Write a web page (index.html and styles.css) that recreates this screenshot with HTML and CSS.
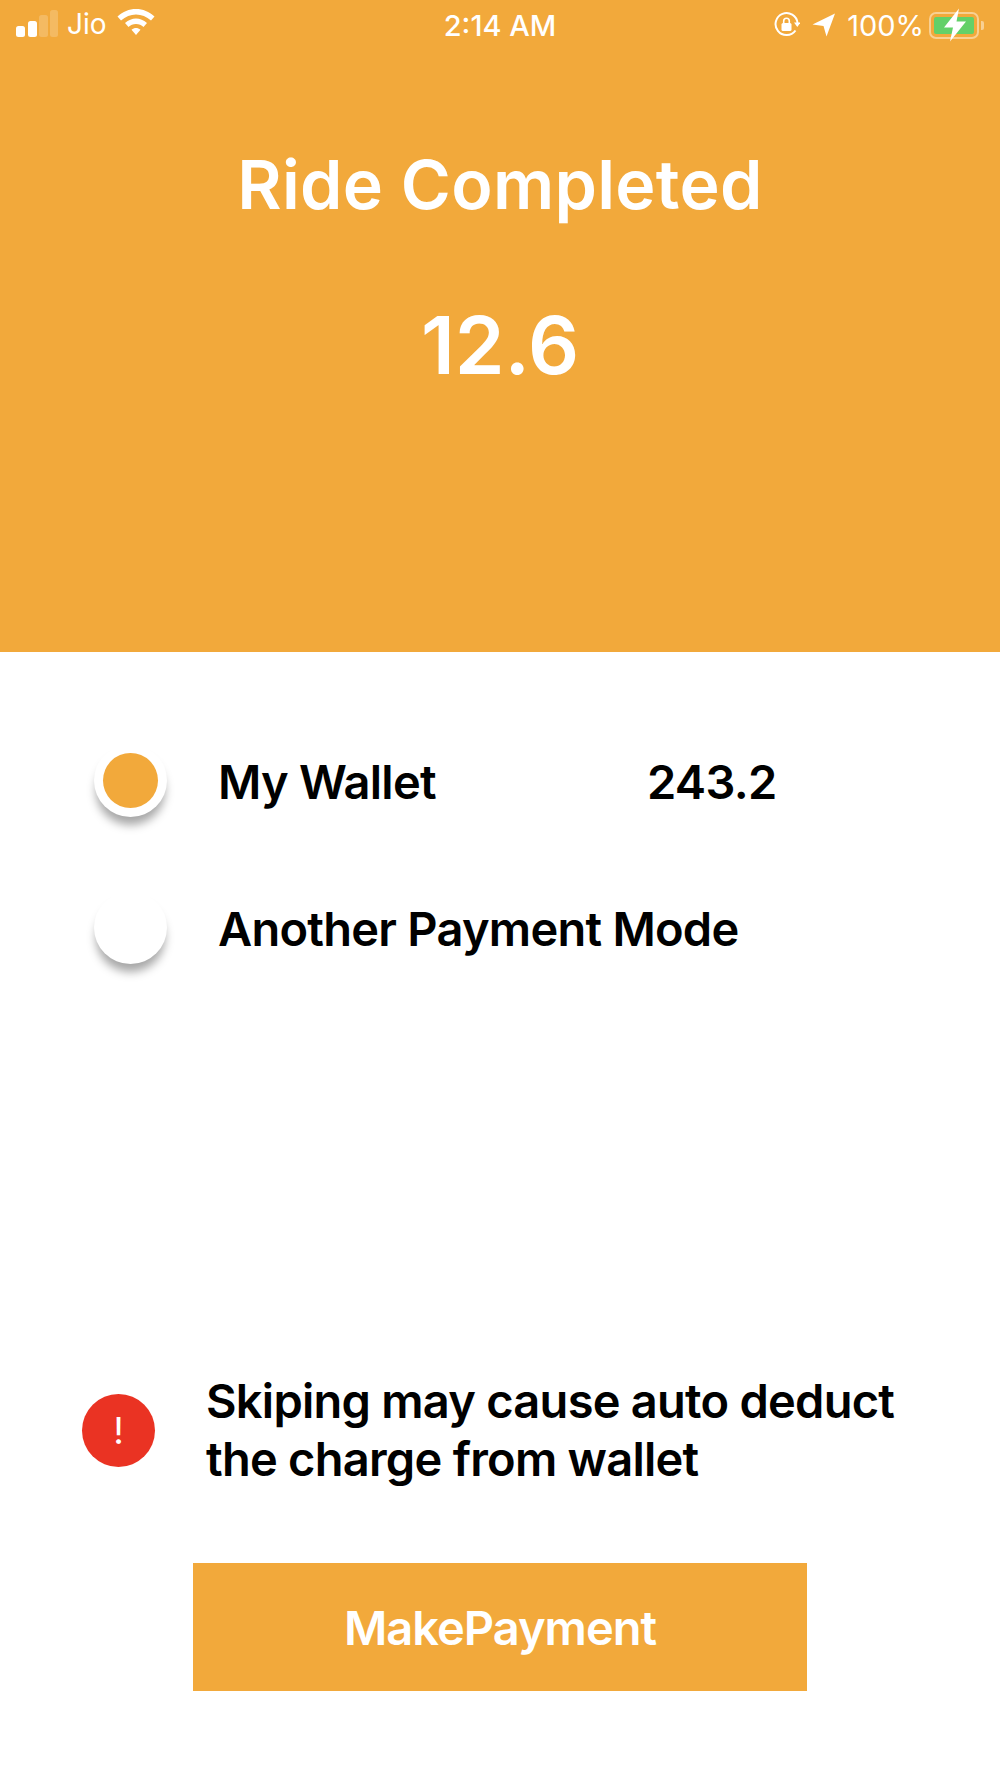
FILE: index.html
```html
<!DOCTYPE html>
<html lang="en">
<head>
  <meta charset="UTF-8">
  <meta name="viewport" content="width=device-width, initial-scale=1.0">
  <title>Ride Completed</title>
  <link rel="stylesheet" href="styles.css">
</head>
<body>

  <div class="header">
    <!-- Status bar -->
    <div class="status-bar">
      <div class="status-left">
        <svg class="signal" width="42" height="28" viewBox="0 0 42 28">
          <rect x="0" y="16" width="9" height="11" rx="2.500" fill="#fff"/>
          <rect x="12" y="11" width="9" height="16" rx="2.500" fill="#fff"/>
          <rect x="23" y="5" width="9" height="22" rx="2.500" fill="#fff" opacity="0.2"/>
          <rect x="34" y="0" width="8" height="27" rx="2.500" fill="#fff" opacity="0.2"/>
        </svg>
        <span class="carrier">Jio</span>
        <svg class="wifi" width="38" height="28" viewBox="0 0 38 28">
          <path d="M19 1C12 1 6 3.500 0.500 8.500L4 12.500C8.500 8.500 13.500 6.500 19 6.500C24.500 6.500 29.500 8.500 34 12.500L37.500 8.500C32 3.500 26 1 19 1Z" fill="#fff"/>
          <path d="M19 10.500C15 10.500 11.500 12 8 15L11.500 19C13.500 17 16 16 19 16C22 16 24.500 17 26.500 19L30 15C26.500 12 23 10.500 19 10.500Z" fill="#fff"/>
          <path d="M19 20C17.500 20 15.800 20.500 14.500 21.800L19 27L23.500 21.800C22.200 20.500 20.500 20 19 20Z" fill="#fff"/>
        </svg>
      </div>
      <div class="status-time">2:14 AM</div>
      <div class="status-right">
        <svg class="lock" width="26" height="26" viewBox="0 0 26 26">
          <path d="M21.500 18.500A11 11 0 1 1 23.500 11" fill="none" stroke="#fff" stroke-width="2"/>
          <path d="M20 10.500H26.500L23.300 15Z" fill="#fff"/>
          <rect x="7.500" y="11" width="10" height="8" rx="1.500" fill="#fff"/>
          <path d="M9.700 11V9A2.800 2.800 0 0 1 15.300 9V11" fill="none" stroke="#fff" stroke-width="1.600"/>
        </svg>
        <svg class="arrow" width="24" height="24" viewBox="0 0 24 24">
          <path d="M23 0.500L0.500 11.500L11.500 13L14.500 23.500Z" fill="#fff"/>
        </svg>
        <span class="battery-text">100%</span>
        <div class="battery">
          <div class="battery-body">
            <div class="battery-fill"></div>
          </div>
          <div class="battery-tip"></div>
          <svg class="bolt" width="24" height="34" viewBox="0 0 24 34">
            <path d="M16 0.500L1 19.500H10L7 33.500L23 13.500H13.500Z" fill="#fff"/>
          </svg>
        </div>
      </div>
    </div>

    <div class="ride-title">Ride Completed</div>
    <div class="ride-amount">12.6</div>
  </div>

  <div class="content">
    <div class="payment-options">
      <div class="option">
        <div class="radio"><div class="radio-dot"></div></div>
        <div class="option-label">My Wallet</div>
        <div class="option-value">243.2</div>
      </div>
      <div class="option">
        <div class="radio"></div>
        <div class="option-label">Another Payment Mode</div>
      </div>
    </div>

    <div class="warning">
      <div class="warning-icon">!</div>
      <div class="warning-text">Skiping may cause auto deduct the charge from wallet</div>
    </div>

    <button class="pay-button">MakePayment</button>
  </div>

</body>
</html>
```

FILE: styles.css
```css
* {
  box-sizing: border-box;
}

body {
  margin: 0;
  padding: 0;
  height: 1778px;
  background-color: #fff;
  color: #000;
  font-family: Inter, 'Liberation Sans', sans-serif;
  overflow: hidden;
}

.header {
  height: 652px;
  background-color: #f2a93b;
  color: #fff;
  display: flex;
  flex-direction: column;
  align-items: center;
}

.status-bar {
  width: 100%;
  height: 50px;
  padding: 0 16px;
  display: grid;
  grid-template-columns: 1fr auto 1fr;
  align-items: center;
  font-size: 28px;
  font-weight: 400;
}

.status-left {
  display: flex;
  align-items: center;
}

.signal {
  margin-top: -2px;
}

.carrier {
  margin-left: 9px;
  margin-top: -2px;
}

.wifi {
  margin-left: 10px;
  margin-top: -6px;
}

.status-time {
  font-size: 29px;
  font-weight: 500;
}

.status-right {
  display: flex;
  align-items: center;
  justify-content: flex-end;
}

.arrow {
  margin-left: 12px;
}

.battery-text {
  margin-left: 11px;
  font-size: 29px;
}

.battery {
  margin-left: 5px;
  display: flex;
  align-items: center;
  position: relative;
}

.battery-body {
  width: 50px;
  height: 27px;
  padding: 3px;
  border: 2px solid rgba(255, 255, 255, 0.45);
  border-radius: 7px;
}

.battery-fill {
  height: 100%;
  background-color: #63d068;
  border-radius: 2px;
}

.battery-tip {
  width: 3px;
  height: 9px;
  margin-left: 2px;
  background-color: rgba(255, 255, 255, 0.45);
  border-radius: 0 2px 2px 0;
}

.bolt {
  position: absolute;
  left: 14px;
  top: -4px;
}

.ride-title {
  margin-top: 94px;
  font-size: 68px;
  font-weight: 600;
  letter-spacing: 0.3px;
  line-height: 80px;
}

.ride-amount {
  margin-top: 74px;
  font-size: 80px;
  font-weight: 600;
  line-height: 94px;
}

.content {
  height: 1126px;
  display: flex;
  flex-direction: column;
}

.payment-options {
  padding: 92px 0 0 94px;
}

.option {
  height: 147px;
  display: flex;
  align-items: flex-start;
}

.radio {
  width: 73px;
  height: 73px;
  flex-shrink: 0;
  border-radius: 50%;
  background-color: #fff;
  box-shadow: 0 10px 10px -2px rgba(0, 0, 0, 0.35);
  display: flex;
  align-items: center;
  justify-content: center;
}

.radio-dot {
  width: 55px;
  height: 55px;
  border-radius: 50%;
  background-color: #f2a93b;
}

.option-label {
  width: 429px;
  margin: 8px 0 0 51px;
  font-size: 47px;
  font-weight: 600;
  letter-spacing: -0.75px;
  line-height: 60px;
  white-space: nowrap;
}

.option-value {
  margin-top: 8px;
  font-size: 47px;
  font-weight: 600;
  letter-spacing: -0.7px;
  line-height: 60px;
}

.warning {
  margin-top: 334px;
  padding-left: 82px;
  display: flex;
  align-items: center;
}

.warning-icon {
  width: 73px;
  height: 73px;
  flex-shrink: 0;
  border-radius: 50%;
  background-color: #ea3323;
  color: #fff;
  font-size: 37px;
  line-height: 73px;
  text-align: center;
}

.warning-text {
  width: 720px;
  margin-left: 51px;
  font-size: 47px;
  font-weight: 600;
  letter-spacing: -0.75px;
  line-height: 58px;
}

.pay-button {
  width: 614px;
  height: 128px;
  margin: 75px 0 0 193px;
  background-color: #f2a93b;
  color: #fff;
  border: none;
  font-family: inherit;
  font-size: 47px;
  font-weight: 600;
  letter-spacing: -1px;
}
```
